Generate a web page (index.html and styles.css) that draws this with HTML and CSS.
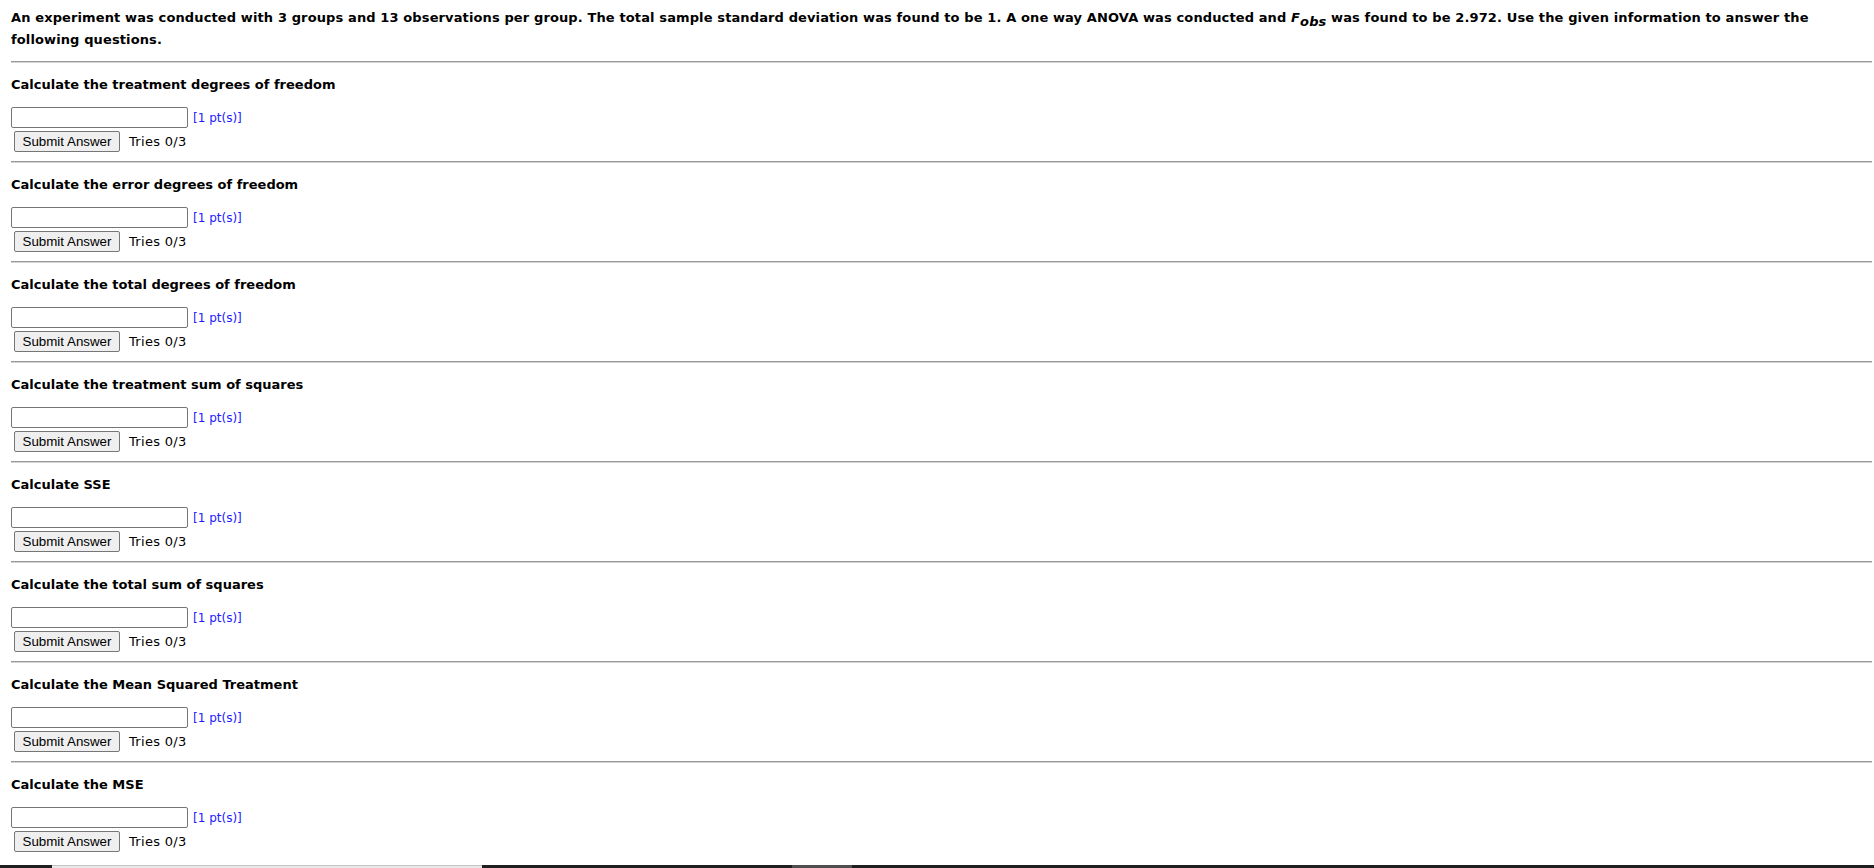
FILE: index.html
```html
<!DOCTYPE html>
<html>
<head>
<meta charset="utf-8">
<title>ANOVA</title>
<link rel="stylesheet" href="styles.css">
</head>
<body>
<div class="page">
  <div class="intro">An experiment was conducted with 3 groups and 13 observations per group. The total sample standard deviation was found to be 1. A one way ANOVA was conducted and <span class="math">F<span class="sub">obs</span></span> was found to be 2.972. Use the given information to answer the following questions.</div>

  <div class="q">
    <div class="q-title">Calculate the treatment degrees of freedom</div>
    <div class="answer"><input class="field" type="text"><span class="pts">[1 pt(s)]</span></div>
    <div class="submit"><button class="btn">Submit Answer</button><span class="tries">Tries 0/3</span></div>
  </div>

  <div class="q">
    <div class="q-title">Calculate the error degrees of freedom</div>
    <div class="answer"><input class="field" type="text"><span class="pts">[1 pt(s)]</span></div>
    <div class="submit"><button class="btn">Submit Answer</button><span class="tries">Tries 0/3</span></div>
  </div>

  <div class="q">
    <div class="q-title">Calculate the total degrees of freedom</div>
    <div class="answer"><input class="field" type="text"><span class="pts">[1 pt(s)]</span></div>
    <div class="submit"><button class="btn">Submit Answer</button><span class="tries">Tries 0/3</span></div>
  </div>

  <div class="q">
    <div class="q-title">Calculate the treatment sum of squares</div>
    <div class="answer"><input class="field" type="text"><span class="pts">[1 pt(s)]</span></div>
    <div class="submit"><button class="btn">Submit Answer</button><span class="tries">Tries 0/3</span></div>
  </div>

  <div class="q">
    <div class="q-title">Calculate SSE</div>
    <div class="answer"><input class="field" type="text"><span class="pts">[1 pt(s)]</span></div>
    <div class="submit"><button class="btn">Submit Answer</button><span class="tries">Tries 0/3</span></div>
  </div>

  <div class="q">
    <div class="q-title">Calculate the total sum of squares</div>
    <div class="answer"><input class="field" type="text"><span class="pts">[1 pt(s)]</span></div>
    <div class="submit"><button class="btn">Submit Answer</button><span class="tries">Tries 0/3</span></div>
  </div>

  <div class="q">
    <div class="q-title">Calculate the Mean Squared Treatment</div>
    <div class="answer"><input class="field" type="text"><span class="pts">[1 pt(s)]</span></div>
    <div class="submit"><button class="btn">Submit Answer</button><span class="tries">Tries 0/3</span></div>
  </div>

  <div class="q">
    <div class="q-title">Calculate the MSE</div>
    <div class="answer"><input class="field" type="text"><span class="pts">[1 pt(s)]</span></div>
    <div class="submit"><button class="btn">Submit Answer</button><span class="tries">Tries 0/3</span></div>
  </div>
</div>

<div class="bottombar">
  <span class="seg seg-a"></span>
  <span class="seg seg-b"></span>
  <span class="seg seg-c"></span>
  <span class="seg seg-d"></span>
  <span class="seg seg-e"></span>
</div>
</body>
</html>
```

FILE: styles.css
```css
html, body {
  margin: 0;
  padding: 0;
  background: #fff;
}

body {
  font-family: Verdana, "DejaVu Sans", sans-serif;
  font-size: 13px;
  color: #000;
}

.page {
  padding: 7px 2px 0 11px;
}

.intro {
  font-weight: bold;
  line-height: 22px;
  letter-spacing: 0.12px;
  padding-bottom: 10px;
}

.math {
  font-style: italic;
}

.math .sub {
  display: inline-block;
  font-size: 13px;
  line-height: 14px;
  vertical-align: -4px;
}

.q {
  border-top: 1px solid #9a9a9a;
  box-shadow: inset 0 1px 0 #d4d4d4;
  padding: 12px 0 9px;
}

.q-title {
  font-weight: bold;
  line-height: 22px;
  margin-bottom: 11px;
}

.answer {
  display: flex;
  align-items: center;
  height: 21px;
}

.field {
  box-sizing: border-box;
  width: 177px;
  height: 21px;
  margin: 0;
  padding: 1px 2px;
  border: 1px solid #767676;
  border-radius: 2px;
  background: #fff;
  font-family: "Liberation Sans", Arial, sans-serif;
  font-size: 13.33px;
}

.pts {
  margin-left: 5px;
  font-size: 12px;
  color: #2020ff;
}

.submit {
  display: flex;
  align-items: center;
  margin-top: 3px;
  height: 21px;
}

.btn {
  box-sizing: border-box;
  height: 21px;
  width: 106px;
  margin: 0 0 0 3px;
  padding: 0 6px;
  border: 1px solid #767676;
  border-radius: 2px;
  background: #efefef;
  color: #000;
  font-family: "Liberation Sans", Arial, sans-serif;
  font-size: 13.33px;
  line-height: 19px;
}

.tries {
  margin-left: 9px;
  font-size: 13px;
  letter-spacing: 0.3px;
}

.bottombar {
  position: fixed;
  left: 0;
  right: 0;
  bottom: 0;
  height: 3px;
  display: flex;
}

.seg {
  display: block;
  height: 3px;
}

.seg-a { width: 52px; background: #1f1f1f; }
.seg-b { width: 430px; background: #e8e8e8; box-shadow: inset 0 1px 0 #c4c4c4; }
.seg-c { width: 310px; background: #1f1f1f; }
.seg-d { width: 60px; background: #4f4f4f; }
.seg-e { flex: 1; background: #1f1f1f; }
```
